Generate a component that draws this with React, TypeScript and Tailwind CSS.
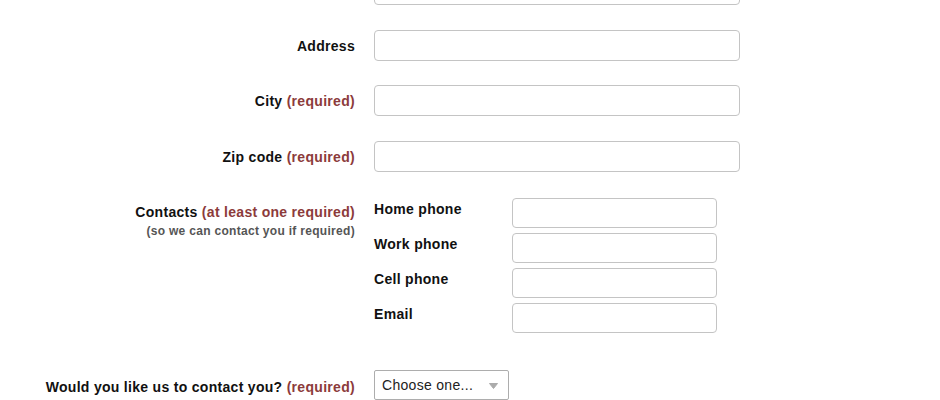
import React from "react";

const req = "text-[#8c3b3b]";
const lbl = "font-bold text-[14px] leading-[17px] tracking-[0.3px] text-[#111]";

function TextRow({ label, required, className }: { label?: string; required?: boolean; className?: string }) {
  return (
    <div className={`flex items-center ${className ?? ""}`}>
      <label className={`w-[355px] text-right pt-[1px] ${lbl}`}>
        {label}
        {required && <span className={req}> (required)</span>}
      </label>
      <input
        type="text"
        className="ml-[19px] w-[366px] h-[31px] rounded-[4px] border border-[#c4c4c4] bg-white outline-none"
      />
    </div>
  );
}

const contacts = ["Home phone", "Work phone", "Cell phone", "Email"];

export default function App() {
  return (
    <div className="bg-white min-h-[400px] overflow-hidden font-['Liberation_Sans',Arial,sans-serif]">
      <div className="flex flex-col mt-[-26px]">
        <TextRow />
        <TextRow label="Address" className="mt-[25px]" />
        <TextRow label="City" required className="mt-[24px]" />
        <TextRow label="Zip code" required className="mt-[25px]" />

        <div className="flex items-start mt-[26px]">
          <div className="w-[355px] text-right pt-[6px]">
            <div className={lbl}>
              Contacts <span className={req}>(at least one required)</span>
            </div>
            <div className="mt-[3px] font-bold text-[12px] leading-[14px] tracking-[0.3px] text-[#555]">
              (so we can contact you if required)
            </div>
          </div>
          <div className="ml-[19px] flex flex-col gap-[5px]">
            {contacts.map((c) => (
              <div key={c} className="flex items-start">
                <label className={`w-[138px] pt-[3px] ${lbl}`}>{c}</label>
                <input
                  type="text"
                  className="w-[205px] h-[30px] rounded-[4px] border border-[#c4c4c4] bg-white outline-none"
                />
              </div>
            ))}
          </div>
        </div>

        <div className="flex items-center mt-[37px]">
          <label className={`w-[355px] text-right pt-[4px] ${lbl}`}>
            Would you like us to contact you? <span className={req}>(required)</span>
          </label>
          <div className="ml-[19px] w-[135px] h-[30px] rounded-[2px] border border-[#adadad] bg-white flex items-center justify-between pl-[7px] pr-[10px]">
            <span className="text-[14px] tracking-[0.3px] text-[#222]">Choose one...</span>
            <svg width="9" height="6" viewBox="0 0 9 6" className="mt-[1px]">
              <path d="M0.5 0.5 L8.5 0.5 L4.5 5.5 Z" fill="#ababab" stroke="#ababab" strokeLinejoin="round" />
            </svg>
          </div>
        </div>
      </div>
    </div>
  );
}
